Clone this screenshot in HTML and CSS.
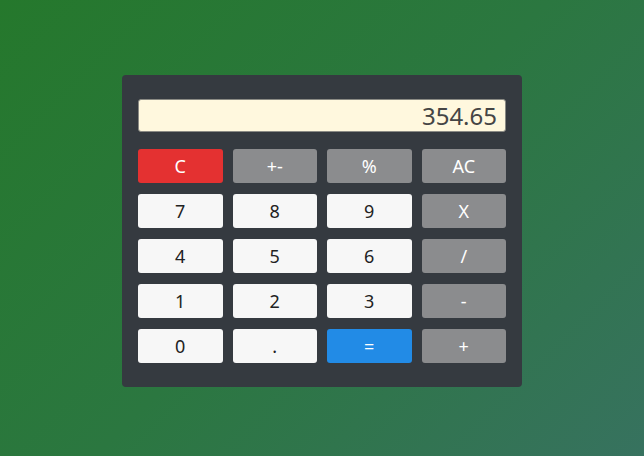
FILE: index.html
```html
<!DOCTYPE html>
<html>
<head>
<meta charset="utf-8">
<link rel="stylesheet" href="styles.css">
</head>
<body>
<div class="calc">
  <div class="display">354.65</div>
  <div class="keys">
    <button class="key red">C</button>
    <button class="key grey">+-</button>
    <button class="key grey">%</button>
    <button class="key grey">AC</button>
    <button class="key">7</button>
    <button class="key">8</button>
    <button class="key">9</button>
    <button class="key grey">X</button>
    <button class="key">4</button>
    <button class="key">5</button>
    <button class="key">6</button>
    <button class="key grey">/</button>
    <button class="key">1</button>
    <button class="key">2</button>
    <button class="key">3</button>
    <button class="key grey">-</button>
    <button class="key">0</button>
    <button class="key">.</button>
    <button class="key blue">=</button>
    <button class="key grey">+</button>
  </div>
</div>
</body>
</html>
```
FILE: styles.css
```css
html, body {
  margin: 0;
  padding: 0;
}
body {
  width: 644px;
  height: 456px;
  box-sizing: border-box;
  padding-top: 6px;
  display: flex;
  align-items: center;
  justify-content: center;
  background: linear-gradient(135deg, #25782c 0%, #2b7740 50%, #37725f 100%);
  font-family: "Noto Sans", "Open Sans", sans-serif;
}
.calc {
  width: 400px;
  box-sizing: border-box;
  padding: 24px 16px;
  background: #353a40;
  border-radius: 4px;
}
.display {
  height: 33px;
  box-sizing: border-box;
  border: 1px solid #8a8a84;
  border-radius: 3px;
  background: #fff8de;
  color: #454545;
  font-size: 24px;
  line-height: 31px;
  text-align: right;
  padding-right: 8px;
  margin-bottom: 17px;
}
.keys {
  display: grid;
  grid-template-columns: repeat(4, 1fr);
  grid-auto-rows: 34px;
  column-gap: 10px;
  row-gap: 11px;
}
.key {
  border: none;
  border-radius: 3px;
  background: #f7f7f7;
  color: #222;
  font-family: inherit;
  font-size: 18px;
  padding: 0;
  margin: 0;
}
.key.grey {
  background: #8b8c8e;
  color: #fff;
}
.key.red {
  background: #e43131;
  color: #fff;
}
.key.blue {
  background: #228be6;
  color: #fff;
}
```
